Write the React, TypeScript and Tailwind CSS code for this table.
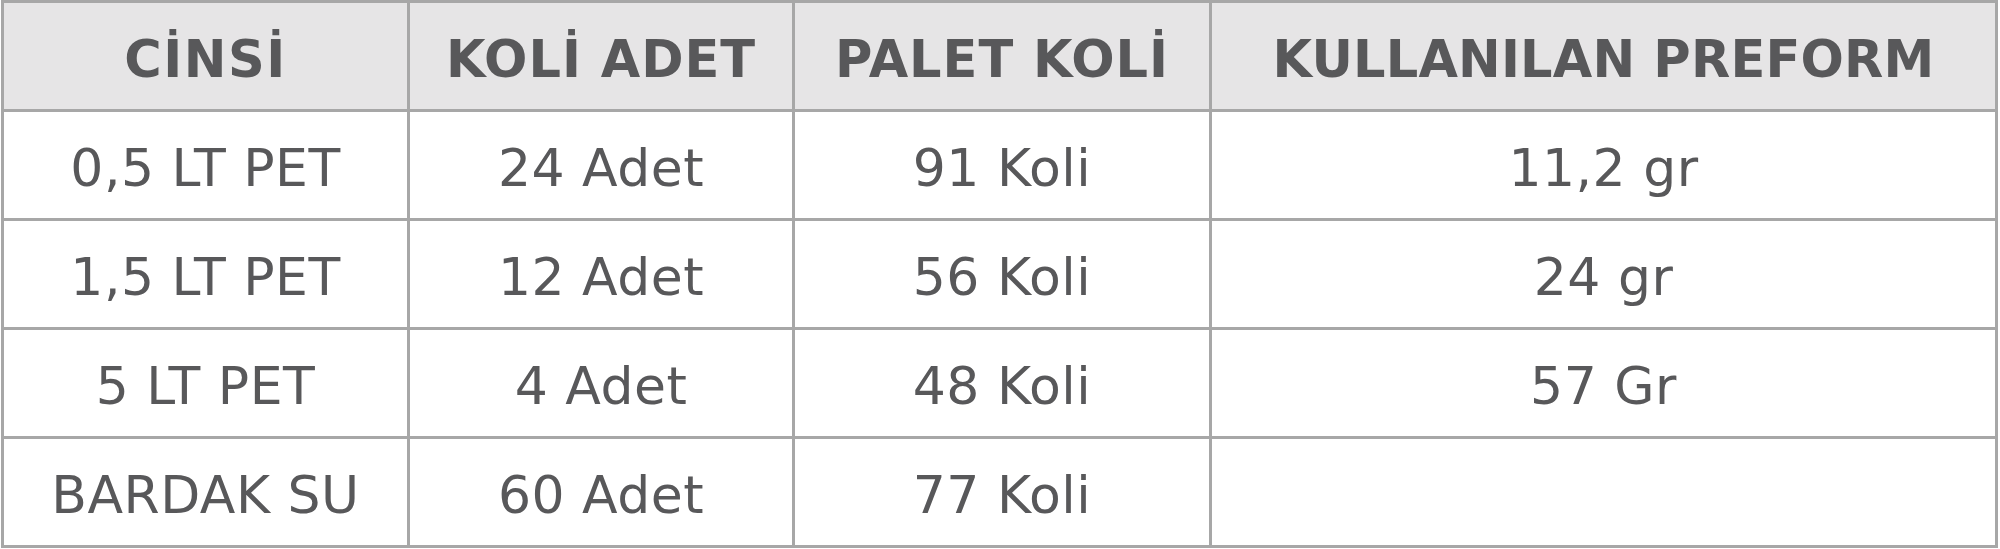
const HEADERS = [
  { label: 'CİNSİ', track: 'tracking-[1.5px]' },
  { label: 'KOLİ ADET', track: 'tracking-[1px]' },
  { label: 'PALET KOLİ', track: 'tracking-[1px]' },
  { label: 'KULLANILAN PREFORM', track: 'tracking-[0.2px]' },
];

const ROWS = [
  ['0,5 LT PET', '24 Adet', '91 Koli', '11,2 gr'],
  ['1,5 LT PET', '12 Adet', '56 Koli', '24 gr'],
  ['5 LT PET', '4 Adet', '48 Koli', '57 Gr'],
  ['BARDAK SU', '60 Adet', '77 Koli', ''],
];

export default function App() {
  return (
    <div className="w-[2000px] h-[549px] bg-white">
      <div
        className="ml-px w-[1997px] grid grid-cols-[403px_382px_414px_783px] grid-rows-[106px_106px_106px_106px_106px] gap-[3px] p-[3px] bg-[#a7a7a7] text-[#58585a]"
        style={{ fontFamily: '"DejaVu Sans", Verdana, sans-serif' }}
      >
        {/* header */}
        {HEADERS.map((h) => (
          <div
            key={h.label}
            className={`bg-[#e6e5e6] flex items-center justify-center pt-[8px] text-[51px] font-bold ${h.track}`}
          >
            {h.label}
          </div>
        ))}

        {/* body */}
        {ROWS.map((row, i) =>
          row.map((cell, j) => (
            <div
              key={`${i}-${j}`}
              className="bg-white flex items-center justify-center pt-[5px] text-[52px] tracking-[0.5px]"
            >
              {cell}
            </div>
          ))
        )}
      </div>
    </div>
  );
}
